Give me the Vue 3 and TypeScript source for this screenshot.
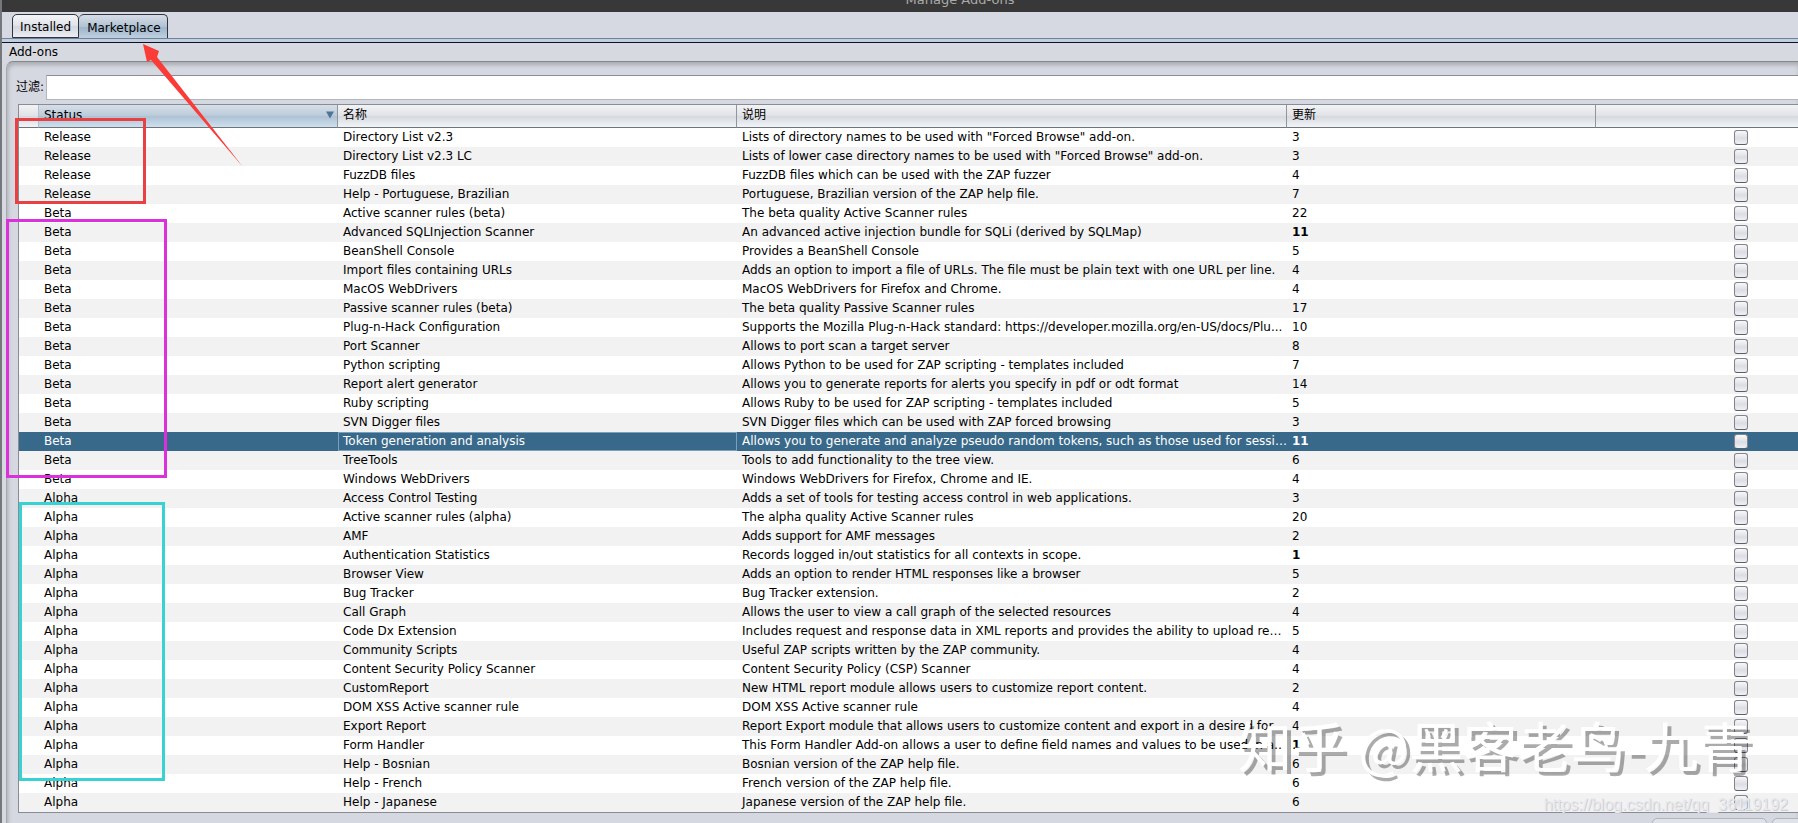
<script setup lang="ts">
import { ref } from 'vue'

interface AddOn {
  status: string
  name: string
  description: string
  update: string
  recent?: boolean
}

const tabs = ['Installed', 'Marketplace']
const activeTab = ref('Marketplace')
const filter = ref('')
const selected = ref('Token generation and analysis')

const groups: Record<string, [string, string, string, boolean?][]> = {
  Release: [
    ['Directory List v2.3', 'Lists of directory names to be used with "Forced Browse" add-on.', '3'],
    ['Directory List v2.3 LC', 'Lists of lower case directory names to be used with "Forced Browse" add-on.', '3'],
    ['FuzzDB files', 'FuzzDB files which can be used with the ZAP fuzzer', '4'],
    ['Help - Portuguese, Brazilian', 'Portuguese, Brazilian version of the ZAP help file.', '7'],
  ],
  Beta: [
    ['Active scanner rules (beta)', 'The beta quality Active Scanner rules', '22'],
    ['Advanced SQLInjection Scanner', 'An advanced active injection bundle for SQLi (derived by SQLMap)', '11', true],
    ['BeanShell Console', 'Provides a BeanShell Console', '5'],
    ['Import files containing URLs', 'Adds an option to import a file of URLs. The file must be plain text with one URL per line.', '4'],
    ['MacOS WebDrivers', 'MacOS WebDrivers for Firefox and Chrome.', '4'],
    ['Passive scanner rules (beta)', 'The beta quality Passive Scanner rules', '17'],
    ['Plug-n-Hack Configuration', 'Supports the Mozilla Plug-n-Hack standard: https://developer.mozilla.org/en-US/docs/Plu...', '10'],
    ['Port Scanner', 'Allows to port scan a target server', '8'],
    ['Python scripting', 'Allows Python to be used for ZAP scripting - templates included', '7'],
    ['Report alert generator', 'Allows you to generate reports for alerts you specify in pdf or odt format', '14'],
    ['Ruby scripting', 'Allows Ruby to be used for ZAP scripting - templates included', '5'],
    ['SVN Digger files', 'SVN Digger files which can be used with ZAP forced browsing', '3'],
    ['Token generation and analysis', 'Allows you to generate and analyze pseudo random tokens, such as those used for session handling', '11', true],
    ['TreeTools', 'Tools to add functionality to the tree view.', '6'],
    ['Windows WebDrivers', 'Windows WebDrivers for Firefox, Chrome and IE.', '4'],
  ],
  Alpha: [
    ['Access Control Testing', 'Adds a set of tools for testing access control in web applications.', '3'],
    ['Active scanner rules (alpha)', 'The alpha quality Active Scanner rules', '20'],
    ['AMF', 'Adds support for AMF messages', '2'],
    ['Authentication Statistics', 'Records logged in/out statistics for all contexts in scope.', '1', true],
    ['Browser View', 'Adds an option to render HTML responses like a browser', '5'],
    ['Bug Tracker', 'Bug Tracker extension.', '2'],
    ['Call Graph', 'Allows the user to view a call graph of the selected resources', '4'],
    ['Code Dx Extension', 'Includes request and response data in XML reports and provides the ability to upload reports', '5'],
    ['Community Scripts', 'Useful ZAP scripts written by the ZAP community.', '4'],
    ['Content Security Policy Scanner', 'Content Security Policy (CSP) Scanner', '4'],
    ['CustomReport', 'New HTML report module allows users to customize report content.', '2'],
    ['DOM XSS Active scanner rule', 'DOM XSS Active scanner rule', '4'],
    ['Export Report', 'Report Export module that allows users to customize content and export in a desired for...', '4'],
    ['Form Handler', 'This Form Handler Add-on allows a user to define field names and values to be used in a form.', '1', true],
    ['Help - Bosnian', 'Bosnian version of the ZAP help file.', '6'],
    ['Help - French', 'French version of the ZAP help file.', '6'],
    ['Help - Japanese', 'Japanese version of the ZAP help file.', '6'],
  ],
}

const addOns: AddOn[] = Object.entries(groups).flatMap(([status, rows]) =>
  rows.map(([name, description, update, recent]) => ({ status, name, description, update, recent })),
)
</script>

<template>
  <div class="dialog">
    <header class="titlebar"><span>Manage Add-ons</span></header>
    <nav class="tabs">
      <button
        v-for="tab in tabs"
        :key="tab"
        type="button"
        class="tab"
        :class="{ active: tab === activeTab }"
        @click="activeTab = tab"
      >{{ tab }}</button>
    </nav>
    <h1 class="caption">Add-ons</h1>
    <main class="panel">
      <div class="filter">
        <label for="filter">过滤:</label>
        <input id="filter" v-model="filter" type="text">
      </div>
      <div class="table-frame">
        <table>
          <colgroup>
            <col class="c-mark"><col class="c-status"><col class="c-name"><col class="c-desc"><col class="c-update"><col>
          </colgroup>
          <thead>
            <tr>
              <th class="first"></th>
              <th class="sorted">
                <span class="sort-label">Status
                  <svg width="8" height="8" viewBox="0 0 8 8" aria-hidden="true"><path d="M0 0.5H8L4 7.5Z" fill="#4d7596" /></svg>
                </span>
              </th>
              <th>名称</th>
              <th>说明</th>
              <th>更新</th>
              <th></th>
            </tr>
          </thead>
          <tbody>
            <tr v-for="a in addOns" :key="a.name" :class="{ selected: a.name === selected }" @click="selected = a.name">
              <td></td>
              <td>{{ a.status }}</td>
              <td class="name">{{ a.name }}</td>
              <td>{{ a.description }}</td>
              <td :class="{ recent: a.recent }">{{ a.update }}</td>
              <td class="pick"><input type="checkbox" :aria-label="a.name"></td>
            </tr>
          </tbody>
        </table>
      </div>
    </main>
    <footer class="actions">
      <button type="button">Install Selected</button>
      <button type="button">Close</button>
    </footer>

    <div class="mark mark-release"></div>
    <div class="mark mark-beta"></div>
    <div class="mark mark-alpha"></div>
    <svg class="arrow" width="105" height="126" viewBox="0 0 105 126" aria-hidden="true">
      <path d="M4 2L20 9L18 15L104 125L12 18L8 20Z" fill="#fa3b38" />
    </svg>
    <div class="watermark">知乎 @黑客老鸟-九青</div>
    <div class="source">https://blog.csdn.net/qq_36119192</div>
  </div>
</template>

<style>
body {
  margin: 0;
}
</style>

<style scoped>
.dialog {
  position: relative;
  box-sizing: border-box;
  height: 100vh;
  overflow: hidden;
  background: #d6d9df;
  color: #000;
  font-family: "DejaVu Sans", "Noto Sans CJK SC", sans-serif;
  font-size: 12px;
  line-height: 19px;
  border-left: 2px solid #74777c;
}
.titlebar {
  height: 12px;
  margin-left: -2px;
  padding-left: 122px;
  background: #383838;
  color: #aaa;
  display: flex;
  align-items: flex-end;
  justify-content: center;
  font-size: 13px;
  line-height: 25px;
  overflow: hidden;
}
.tabs {
  position: relative;
  display: flex;
  align-items: flex-end;
  height: 26px;
  padding-left: 10px;
  background: #d6d9e2;
  border-bottom: 1px solid #6f8397;
  box-shadow: 0 3px #c0cee0, 0 4px #0c1028;
}
.tab {
  height: 24px;
  padding: 3px 7px 0;
  border: 1px solid #30343c;
  border-radius: 5px 5px 0 0;
  background: linear-gradient(#f4f5f8, #dfe2e7 50%, #d2d6dd 51%, #eceef3);
  font: inherit;
  color: inherit;
}
.tab.active {
  padding: 3px 6px 0 8px;
  border-left: 0;
  border-bottom: 0;
  background: linear-gradient(#d5dde6, #b3c3d3 50%, #9fb5c9 55%, #bfd0e0);
}
.caption {
  margin: 4px 0 0;
  padding-left: 7px;
  font-size: 12px;
  font-weight: 400;
  line-height: 18px;
}
.panel {
  margin-left: 4px;
  padding: 13px 0 12px 9px;
  border-top: 1px solid #85878c;
  border-left: 1px solid #a6a9b0;
  border-radius: 7px 0 0 0;
  background: #d6d8e1;
  box-shadow: inset 1px 3px 4px #a9abb0;
}
.filter {
  display: flex;
  align-items: center;
  height: 25px;
  margin-bottom: 4px;
}
.filter label {
  width: 30px;
  white-space: nowrap;
}
.filter input {
  flex: 1;
  min-width: 0;
  height: 25px;
  box-sizing: border-box;
  border: 1px solid #b4b6ba;
  border-top-color: #8a8c92;
  border-right: 0;
  background: #fff;
  font: inherit;
}
.table-frame {
  margin-left: 2px;
  border: 1px solid #8a8c93;
  border-right: 0;
}
table {
  width: 100%;
  table-layout: fixed;
  border-collapse: separate;
  border-spacing: 0;
}
.c-mark { width: 20px; }
.c-status { width: 299px; }
.c-name { width: 399px; }
.c-desc { width: 550px; }
.c-update { width: 309px; }
th {
  height: 23px;
  box-sizing: border-box;
  padding: 0 5px 2px;
  border-right: 1px solid #92959b;
  border-bottom: 1px solid #70737a;
  background: linear-gradient(#f2f3f5, #e1e3e6 48%, #d6d9de 52%, #f2f5f8);
  text-align: left;
  font-weight: 400;
  line-height: 20px;
}
th.first {
  border-right-color: #b4bcc6;
}
th:last-child {
  border-right: 0;
}
th.sorted {
  padding-right: 3px;
  background: linear-gradient(#d6dfe8, #bccbd9 48%, #aec2d4 52%, #cde0ee);
}
.sort-label {
  display: flex;
  align-items: center;
  justify-content: space-between;
}
td {
  height: 19px;
  box-sizing: border-box;
  padding: 0 0 0 5px;
  line-height: 19px;
  white-space: nowrap;
  overflow: hidden;
  text-overflow: ellipsis;
}
tbody tr {
  background: #fff;
}
tbody tr:nth-child(even) {
  background: #f2f2f2;
}
tbody tr.selected {
  background: #39698a;
  color: #fff;
}
.selected .name {
  box-shadow: inset 0 0 0 1px #7aa0bd;
}
.recent {
  font-weight: 700;
}
.pick {
  padding: 0 50px 0 0;
  text-align: right;
}
.pick input {
  appearance: none;
  display: block;
  box-sizing: border-box;
  width: 14px;
  height: 15px;
  margin: 0 0 0 auto;
  border: 1px solid #82848c;
  border-bottom-color: #5c5e66;
  border-radius: 3px;
  background: linear-gradient(#f8f8fa, #dcdde3 55%, #f0f1f5);
}
.actions {
  display: flex;
  justify-content: flex-end;
  gap: 5px;
  margin-top: -7px;
}
.actions button {
  width: 115px;
  height: 22px;
  border: 1px solid #b0b4bb;
  border-radius: 5px;
  background: #dfe2e8;
  color: #777;
  font: inherit;
  line-height: 16px;
}
.actions button:last-child {
  width: 40px;
  margin-right: -14px;
}
.mark {
  position: absolute;
  box-sizing: border-box;
  border: 3px solid;
  pointer-events: none;
}
.mark-release {
  left: 13px;
  top: 118px;
  width: 131px;
  height: 86px;
  border-color: #e84143;
}
.mark-beta {
  left: 4px;
  top: 219px;
  width: 161px;
  height: 259px;
  border-color: #dd30dd;
}
.mark-alpha {
  left: 17px;
  top: 502px;
  width: 146px;
  height: 279px;
  border-color: #38d2d2;
}
.arrow {
  position: absolute;
  left: 137px;
  top: 42px;
  pointer-events: none;
}
.watermark {
  position: absolute;
  right: 46px;
  bottom: 40px;
  color: #fff;
  font-family: "Noto Sans CJK SC", sans-serif;
  font-size: 54px;
  line-height: 76px;
  text-shadow: 4px 4px 0 rgba(0, 0, 0, 0.33);
  white-space: nowrap;
  pointer-events: none;
}
.source {
  position: absolute;
  right: 10px;
  bottom: 8px;
  color: #e9e9ec;
  font-family: "Liberation Sans", sans-serif;
  font-size: 16px;
  line-height: 20px;
  text-shadow: 1px 1px 0 #ccced2;
  white-space: nowrap;
  pointer-events: none;
}
</style>
